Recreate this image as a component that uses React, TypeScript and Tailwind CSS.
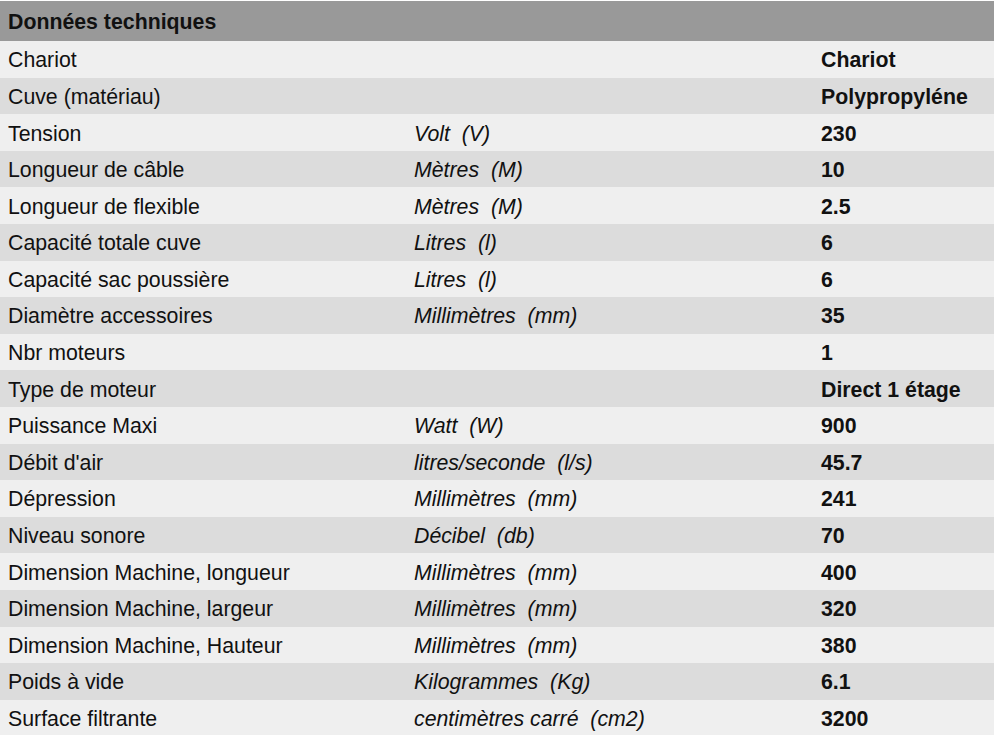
interface Spec {
  label: string;
  unit?: string;
  value: string;
}

const specs: Spec[] = [
  { label: "Chariot", value: "Chariot" },
  { label: "Cuve (matériau)", value: "Polypropyléne" },
  { label: "Tension", unit: "Volt  (V)", value: "230" },
  { label: "Longueur de câble", unit: "Mètres  (M)", value: "10" },
  { label: "Longueur de flexible", unit: "Mètres  (M)", value: "2.5" },
  { label: "Capacité totale cuve", unit: "Litres  (l)", value: "6" },
  { label: "Capacité sac poussière", unit: "Litres  (l)", value: "6" },
  { label: "Diamètre accessoires", unit: "Millimètres  (mm)", value: "35" },
  { label: "Nbr moteurs", value: "1" },
  { label: "Type de moteur", value: "Direct 1 étage" },
  { label: "Puissance Maxi", unit: "Watt  (W)", value: "900" },
  { label: "Débit d'air", unit: "litres/seconde  (l/s)", value: "45.7" },
  { label: "Dépression", unit: "Millimètres  (mm)", value: "241" },
  { label: "Niveau sonore", unit: "Décibel  (db)", value: "70" },
  { label: "Dimension Machine, longueur", unit: "Millimètres  (mm)", value: "400" },
  { label: "Dimension Machine, largeur", unit: "Millimètres  (mm)", value: "320" },
  { label: "Dimension Machine, Hauteur", unit: "Millimètres  (mm)", value: "380" },
  { label: "Poids à vide", unit: "Kilogrammes  (Kg)", value: "6.1" },
  { label: "Surface filtrante", unit: "centimètres carré  (cm2)", value: "3200" },
];

export default function App() {
  return (
    <div
      className="w-[994px] h-[735px] overflow-hidden bg-white pt-px text-[21.3px] text-[#111]"
      style={{ fontFamily: '"Liberation Sans", Arial, sans-serif' }}
    >
      <div className="h-[40px] bg-[#999999] flex items-center px-2 pt-[4px] font-bold">
        Données techniques
      </div>
      {specs.map((row, i) => (
        <div
          key={i}
          className={`h-[36.6px] grid grid-cols-[406px_407px_1fr] items-center px-2 pt-[4px] ${
            i % 2 === 0 ? "bg-[#efefef]" : "bg-[#dcdcdc]"
          }`}
        >
          <span>{row.label}</span>
          <span className="italic whitespace-pre">{row.unit}</span>
          <span className="font-bold">{row.value}</span>
        </div>
      ))}
    </div>
  );
}
